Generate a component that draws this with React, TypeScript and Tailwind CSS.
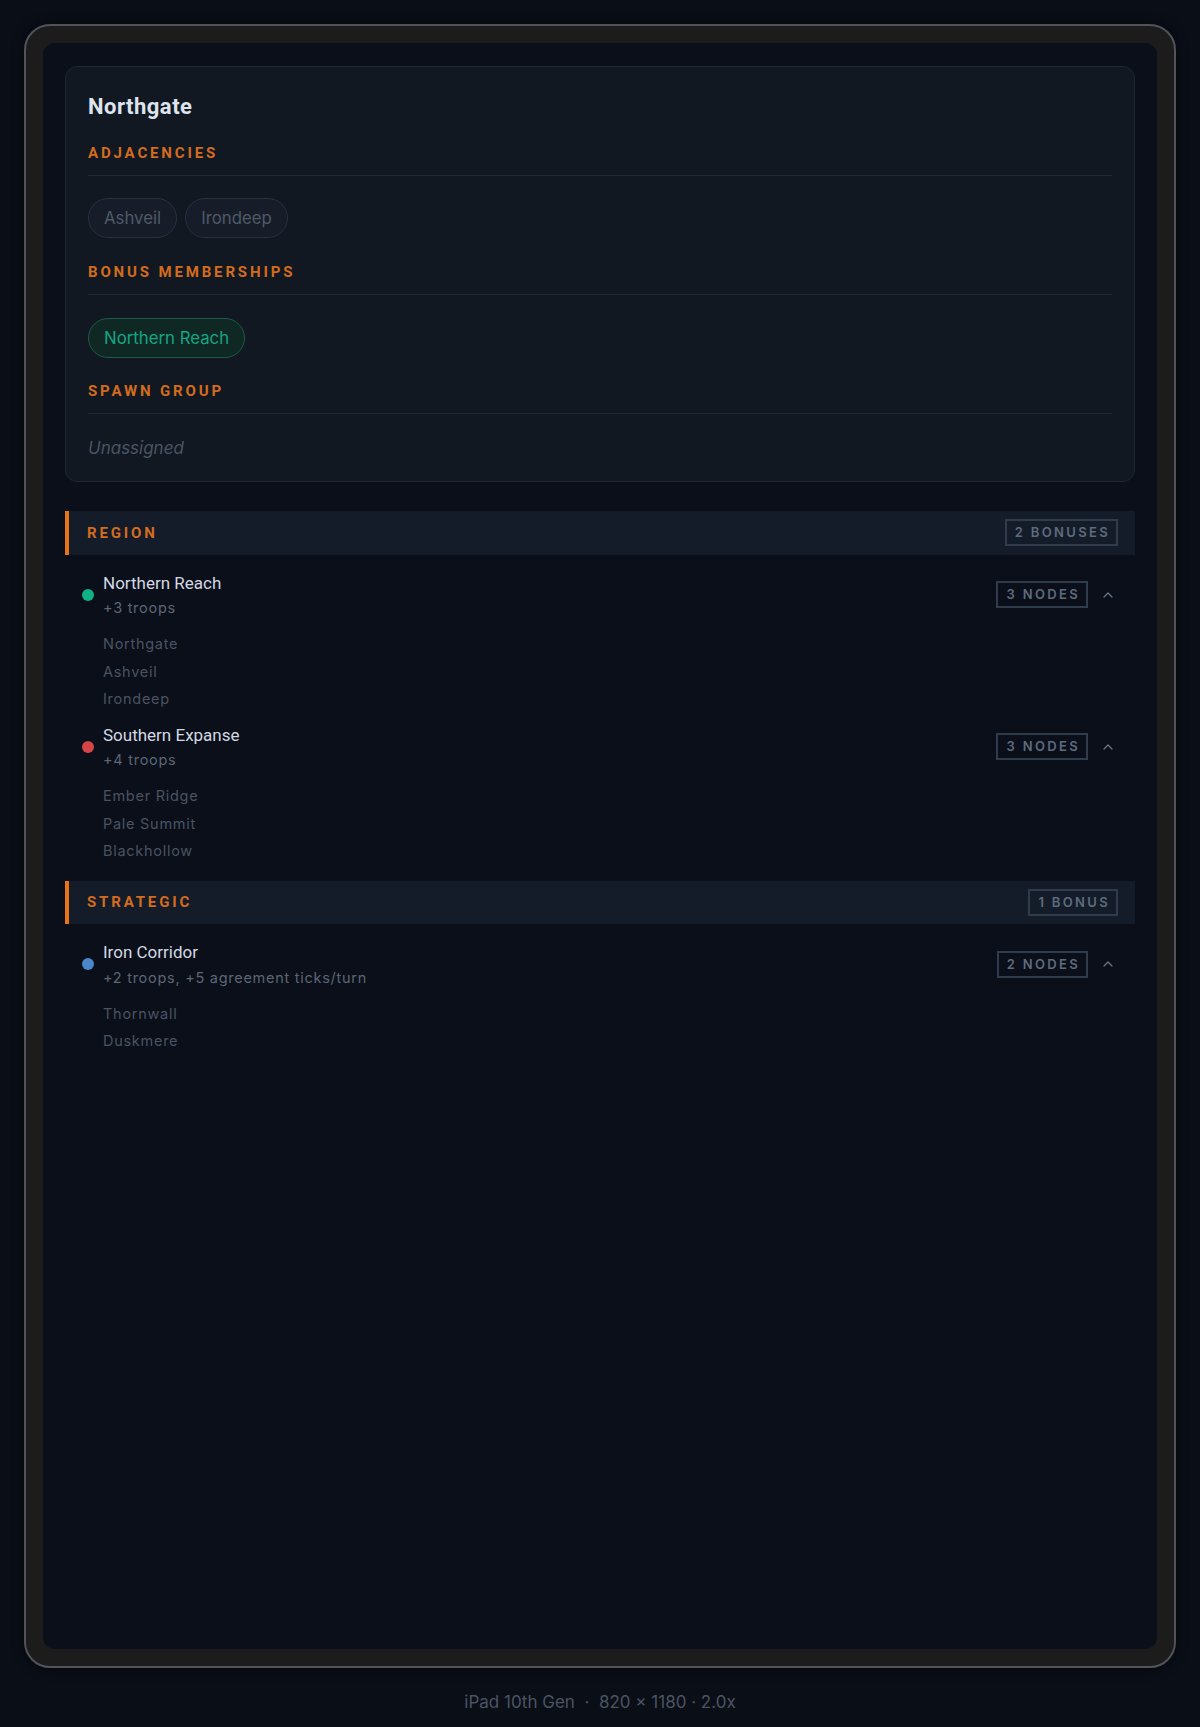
import React from "react";
import { ChevronUp } from "lucide-react";

const DISPLAY = "font-[family-name:Roboto,sans-serif]";
const BODY = "font-[family-name:Inter,sans-serif]";

function SectionHeader({
  children,
  top,
  line,
}: {
  children: React.ReactNode;
  top: string;
  line: string;
}) {
  return (
    <div className={top}>
      <div
        className={`${DISPLAY} text-[15px] leading-5 font-bold tracking-[2.85px] text-[#d46c1d] uppercase`}
      >
        {children}
      </div>
      <div className={`${line} h-px bg-[#1f2835]`} />
    </div>
  );
}

function Chip({ children, green = false }: { children: React.ReactNode; green?: boolean }) {
  return (
    <span
      className={`${BODY} inline-block rounded-full border px-[15px] py-[7px] text-[16.8px] leading-6 ${
        green
          ? "border-[#1c5a4b] bg-[#0f2824] text-[#15a583]"
          : "border-[#283141] bg-[#161d28] text-[#4f5968]"
      }`}
    >
      {children}
    </span>
  );
}

function Badge({ children }: { children: React.ReactNode }) {
  return (
    <span
      className={`${BODY} inline-block border-2 border-[#303b4c] py-[3px] pl-2 pr-[6px] text-[13px] leading-[17px] font-semibold tracking-[0.18em] text-[#5e6b7d] uppercase`}
    >
      {children}
    </span>
  );
}

function Bar({ title, badge }: { title: string; badge: string }) {
  return (
    <div className="flex h-[43.5px] items-center justify-between border-l-4 border-[#e8741a] bg-[#141c2a] pl-[18px] pr-[17px]">
      <span
        className={`${DISPLAY} text-[15px] leading-5 font-bold tracking-[2.85px] text-[#d46c1d] uppercase`}
      >
        {title}
      </span>
      <Badge>{badge}</Badge>
    </div>
  );
}

type Item = { name: string; desc: string; color: string; nodes: string[] };

function BonusItem({ item }: { item: Item }) {
  return (
    <div className="py-[5.5px]">
      <div className="flex items-center pl-[17px] pr-[19px]">
        <span className="h-3 w-3 shrink-0 rounded-full" style={{ backgroundColor: item.color }} />
        <div className="ml-[9px] flex-1">
          <div className={`${DISPLAY} text-[17px] leading-[22px] text-[#d3d9e2]`}>{item.name}</div>
          <div className={`${BODY} mt-[4.5px] text-[14.5px] leading-5 tracking-[0.05em] text-[#5d6674]`}>
            {item.desc}
          </div>
        </div>
        <Badge>{`${item.nodes.length} Nodes`}</Badge>
        <ChevronUp className="ml-3 h-4 w-4 text-[#667385]" strokeWidth={2} />
      </div>
      <div className="mt-3 pl-[38px]">
        {item.nodes.map((n) => (
          <div key={n} className={`${BODY} text-[14.5px] leading-[27.5px] tracking-[0.05em] text-[#4a5361]`}>
            {n}
          </div>
        ))}
      </div>
    </div>
  );
}

const region: Item[] = [
  { name: "Northern Reach", desc: "+3 troops", color: "#10b184", nodes: ["Northgate", "Ashveil", "Irondeep"] },
  { name: "Southern Expanse", desc: "+4 troops", color: "#d64545", nodes: ["Ember Ridge", "Pale Summit", "Blackhollow"] },
];

const strategic: Item[] = [
  {
    name: "Iron Corridor",
    desc: "+2 troops, +5 agreement ticks/turn",
    color: "#4a86c8",
    nodes: ["Thornwall", "Duskmere"],
  },
];

export default function App() {
  return (
    <div className="min-h-[1727px] w-full bg-[#0a0e17] pt-6">
      <div className="mx-auto h-[1644px] w-[1152px] rounded-[26px] border-2 border-[#505357] bg-[#1c1c1c] p-[17px] shadow-[0_0_12px_rgba(0,0,0,0.6)]">
        <div className="h-full rounded-[12px] bg-[#0a0f1a] px-[22px] pt-[23px]">
          <div className="rounded-xl border border-[#1e2633] bg-[#111822] px-[22px] pt-[26px] pb-[21px]">
            <div className={`${DISPLAY} text-[22px] leading-[28px] font-bold tracking-[0.5px] text-[#dde4ee]`}>
              Northgate
            </div>

            <SectionHeader top="mt-[22px]" line="mt-[12px]">
              Adjacencies
            </SectionHeader>
            <div className="mt-[22px] flex gap-2">
              <Chip>Ashveil</Chip>
              <Chip>Irondeep</Chip>
            </div>

            <SectionHeader top="mt-6" line="mt-[12px]">
              Bonus Memberships
            </SectionHeader>
            <div className="mt-[23px] flex gap-2">
              <Chip green>Northern Reach</Chip>
            </div>

            <SectionHeader top="mt-[23px]" line="mt-[12px]">
              Spawn Group
            </SectionHeader>
            <div className={`${BODY} mt-[22px] text-[17px] leading-6 italic text-[#4b5463]`}>Unassigned</div>
          </div>

          <div className="mt-[29px]">
            <Bar title="Region" badge="2 Bonuses" />
            <div className="pt-[11.5px] pb-[10.5px]">
              {region.map((it) => (
                <BonusItem key={it.name} item={it} />
              ))}
            </div>
            <Bar title="Strategic" badge="1 Bonus" />
            <div className="pt-[11.5px] pb-[10.5px]">
              {strategic.map((it) => (
                <BonusItem key={it.name} item={it} />
              ))}
            </div>
          </div>
        </div>
      </div>
      <div className={`${BODY} mt-[22px] text-center text-[17px] leading-6 whitespace-pre text-[#4b5463]`}>
        {"iPad 10th Gen  ·  820 × 1180 · 2.0x"}
      </div>
    </div>
  );
}
